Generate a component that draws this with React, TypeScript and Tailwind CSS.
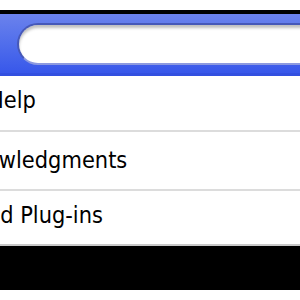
export default function App() {
  const font = { fontFamily: '"DejaVu Sans", Verdana, sans-serif' };
  return (
    <div className="w-[300px] h-[300px] overflow-hidden bg-white flex flex-col" style={font}>
      <div className="h-[10px] bg-white shrink-0" />
      <div className="h-[4px] bg-black shrink-0" />
      <div className="h-[62px] shrink-0 bg-gradient-to-b from-[#6b82ec] to-[#3857ea] border-b-[3px] border-[#3350e0] flex items-center pl-[17px]">
        <div className="h-[42px] flex-1 -mr-[40px] rounded-full bg-white border-[2px] border-[#4658b8] border-b-[#8d9ae0] shadow-[inset_0_3px_3px_rgba(0,0,0,0.25)]" />
      </div>
      <div className="h-[56px] shrink-0 border-b-2 border-[#dcdcdc] flex items-end pb-[18px] overflow-hidden">
        <span className="whitespace-nowrap text-[21px] leading-none text-black ml-[-12px] scale-y-110 origin-bottom">Help</span>
      </div>
      <div className="h-[59px] shrink-0 border-b-2 border-[#dcdcdc] flex items-end pb-[17px] overflow-hidden">
        <span className="whitespace-nowrap text-[21px] leading-none text-black ml-[-65px] scale-y-110 origin-bottom">Acknowledgments</span>
      </div>
      <div className="h-[55px] shrink-0 border-b-2 border-[#c8c8c8] flex items-end pb-[17px] overflow-hidden">
        <span className="whitespace-nowrap text-[21px] leading-none text-black ml-[-76px] scale-y-110 origin-bottom">Installed Plug-ins</span>
      </div>
      <div className="h-[44px] bg-black shrink-0" />
      <div className="flex-1 bg-white" />
    </div>
  );
}
